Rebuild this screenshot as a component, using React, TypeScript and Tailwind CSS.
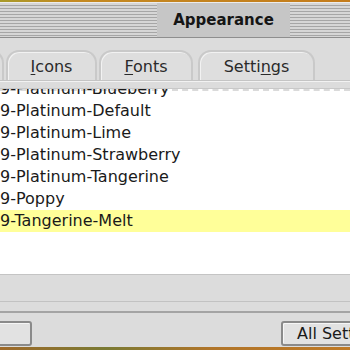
import React from 'react';

const items = [
  { name: '9-Platinum-Blueberry', selected: false },
  { name: '9-Platinum-Default', selected: false },
  { name: '9-Platinum-Lime', selected: false },
  { name: '9-Platinum-Strawberry', selected: false },
  { name: '9-Platinum-Tangerine', selected: false },
  { name: '9-Poppy', selected: false },
  { name: '9-Tangerine-Melt', selected: true },
];

function Tab({ children, className }: { children: React.ReactNode; className: string }) {
  return (
    <div
      className={`h-[30px] flex items-center justify-center shrink-0 rounded-t-[13px] border-x-2 border-t-2 border-[#c9c9c9] bg-[#dedede] shadow-[inset_1px_1px_0_#f2f2f2] text-[16px] text-[#2a2a2a] pt-[2px] ${className}`}
    >
      {children}
    </div>
  );
}

export default function App() {
  return (
    <div className="w-[350px] h-[350px] overflow-hidden flex flex-col bg-[#dcdcdc] font-['DejaVu_Sans',sans-serif]">
      <div className="h-[2px] shrink-0 bg-[linear-gradient(to_right,#a89a2a,#c48a22_20%,#c47c1c)]" />
      <div className="h-px shrink-0 bg-[#ececec]" />

      {/* title bar */}
      <div className="h-[34px] shrink-0 flex bg-[repeating-linear-gradient(to_bottom,#d6d6d6_0px,#d6d6d6_2px,#a6a6a6_2px,#a6a6a6_3px)]">
        <div className="ml-[157px] w-[133px] bg-[#c6c6c6] flex items-center justify-center text-[15px] font-bold text-[#151515] pt-px">
          Appearance
        </div>
      </div>
      <div className="h-px shrink-0 bg-[#8e8e8e]" />

      {/* tabs */}
      <div className="h-[42px] shrink-0 flex items-end">
        <Tab className="w-[40px] -ml-[36px]">
          <span />
        </Tab>
        <Tab className="w-[91px] ml-[2px]">
          <span>
            <span className="underline underline-offset-2">I</span>cons
          </span>
        </Tab>
        <Tab className="w-[94px] ml-[2px]">
          <span>
            <span className="underline underline-offset-2">F</span>onts
          </span>
        </Tab>
        <Tab className="w-[117px] ml-[5px]">
          <span>
            Setti<span className="underline underline-offset-2">n</span>gs
          </span>
        </Tab>
      </div>
      <div className="h-px shrink-0 bg-[#c4c4c4]" />
      <div className="h-px shrink-0 bg-[#f2f2f2]" />
      <div className="h-[6px] shrink-0" />

      {/* list */}
      <div className="h-[186px] shrink-0 bg-white border-t border-[#c8c8c8] overflow-hidden flex flex-col">
        <div className="h-[2px] shrink-0 border-b-2 border-dashed border-[#dadada]" />
        <div className="-mt-[13px] flex flex-col">
          {items.map((it) => (
            <div
              key={it.name}
              className={`h-[22px] shrink-0 flex items-center text-[16px] text-[#1a1a1a] whitespace-nowrap ${it.selected ? 'bg-[#ffff99]' : ''}`}
            >
              {it.name}
            </div>
          ))}
        </div>
      </div>
      <div className="h-px shrink-0 bg-[#c4c4c4]" />

      {/* footer */}
      <div className="h-[27px] shrink-0 border-b border-[#c2c2c2]" />
      <div className="h-[11px] shrink-0 border-b-2 border-[#a4a4a4]" />
      <div className="h-[8px] shrink-0" />
      <div className="h-[25px] shrink-0 flex justify-between">
        <div className="w-[40px] -ml-[8px] rounded-[3px] border-2 border-[#8a8a8a] bg-[#e2e2e2] shadow-[inset_1px_1px_0_#f6f6f6]" />
        <div className="w-[90px] -mr-[21px] rounded-[3px] border-2 border-[#8a8a8a] bg-[#e2e2e2] shadow-[inset_1px_1px_0_#f6f6f6] flex items-center pl-[14px] text-[16px] text-[#1a1a1a] whitespace-nowrap">
          All Settings
        </div>
      </div>
      <div className="flex-1 mt-[1px] bg-[linear-gradient(to_right,#a06a2a,#7a7a34_30%,#b0752a_60%,#c07a26)]" />
    </div>
  );
}
